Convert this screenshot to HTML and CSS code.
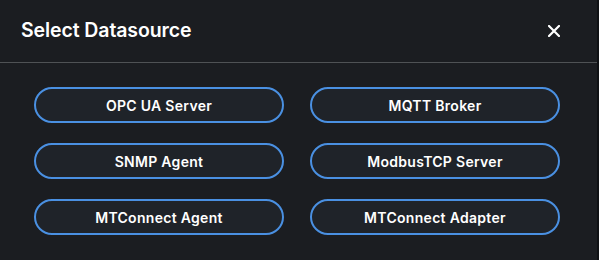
FILE: index.html
```html
<!DOCTYPE html>
<html lang="en">
<head>
<meta charset="utf-8">
<title>Select Datasource</title>
<link rel="stylesheet" href="styles.css">
</head>
<body>
<div class="modal">
  <header class="modal-header">
    <h1 class="modal-title">Select Datasource</h1>
    <button class="close-btn" aria-label="Close">
      <svg width="12" height="12" viewBox="0 0 12 12"><path d="M1 1L11 11M11 1L1 11" stroke="#ffffff" stroke-width="2.2" stroke-linecap="square"/></svg>
    </button>
  </header>
  <div class="modal-body">
    <button class="ds-btn">OPC UA Server</button>
    <button class="ds-btn">MQTT Broker</button>
    <button class="ds-btn">SNMP Agent</button>
    <button class="ds-btn">ModbusTCP Server</button>
    <button class="ds-btn">MTConnect Agent</button>
    <button class="ds-btn">MTConnect Adapter</button>
  </div>
</div>
</body>
</html>
```
FILE: styles.css
```css
html, body {
  margin: 0;
  padding: 0;
  background: #0f1114;
  width: 599px;
  height: 260px;
  overflow: hidden;
}
.modal {
  width: 597px;
  height: 260px;
  background: #1b1d21;
  font-family: Inter, "Noto Sans", sans-serif;
  color: #ffffff;
  box-sizing: border-box;
}
.modal-header {
  height: 63px;
  box-sizing: border-box;
  display: flex;
  align-items: center;
  justify-content: space-between;
  padding: 0 37px 2px 21px;
  border-bottom: 1px solid #4f5255;
}
.modal-title {
  margin: 0;
  font-size: 19.5px;
  font-weight: 600;
  letter-spacing: -0.1px;
}
.close-btn {
  background: none;
  border: 0;
  padding: 0;
  width: 12px;
  height: 12px;
  display: flex;
  margin-top: 2px;
}
.modal-body {
  display: grid;
  grid-template-columns: 250px 250px;
  column-gap: 26px;
  row-gap: 20px;
  padding: 24px 0 0 34px;
}
.ds-btn {
  height: 36px;
  box-sizing: border-box;
  border: 2px solid #4a90e2;
  border-radius: 18px;
  background: #1f2329;
  color: #ffffff;
  font-family: Inter, "Noto Sans", sans-serif;
  font-size: 14px;
  font-weight: 600;
  letter-spacing: 0.3px;
  padding: 0;
}
```
